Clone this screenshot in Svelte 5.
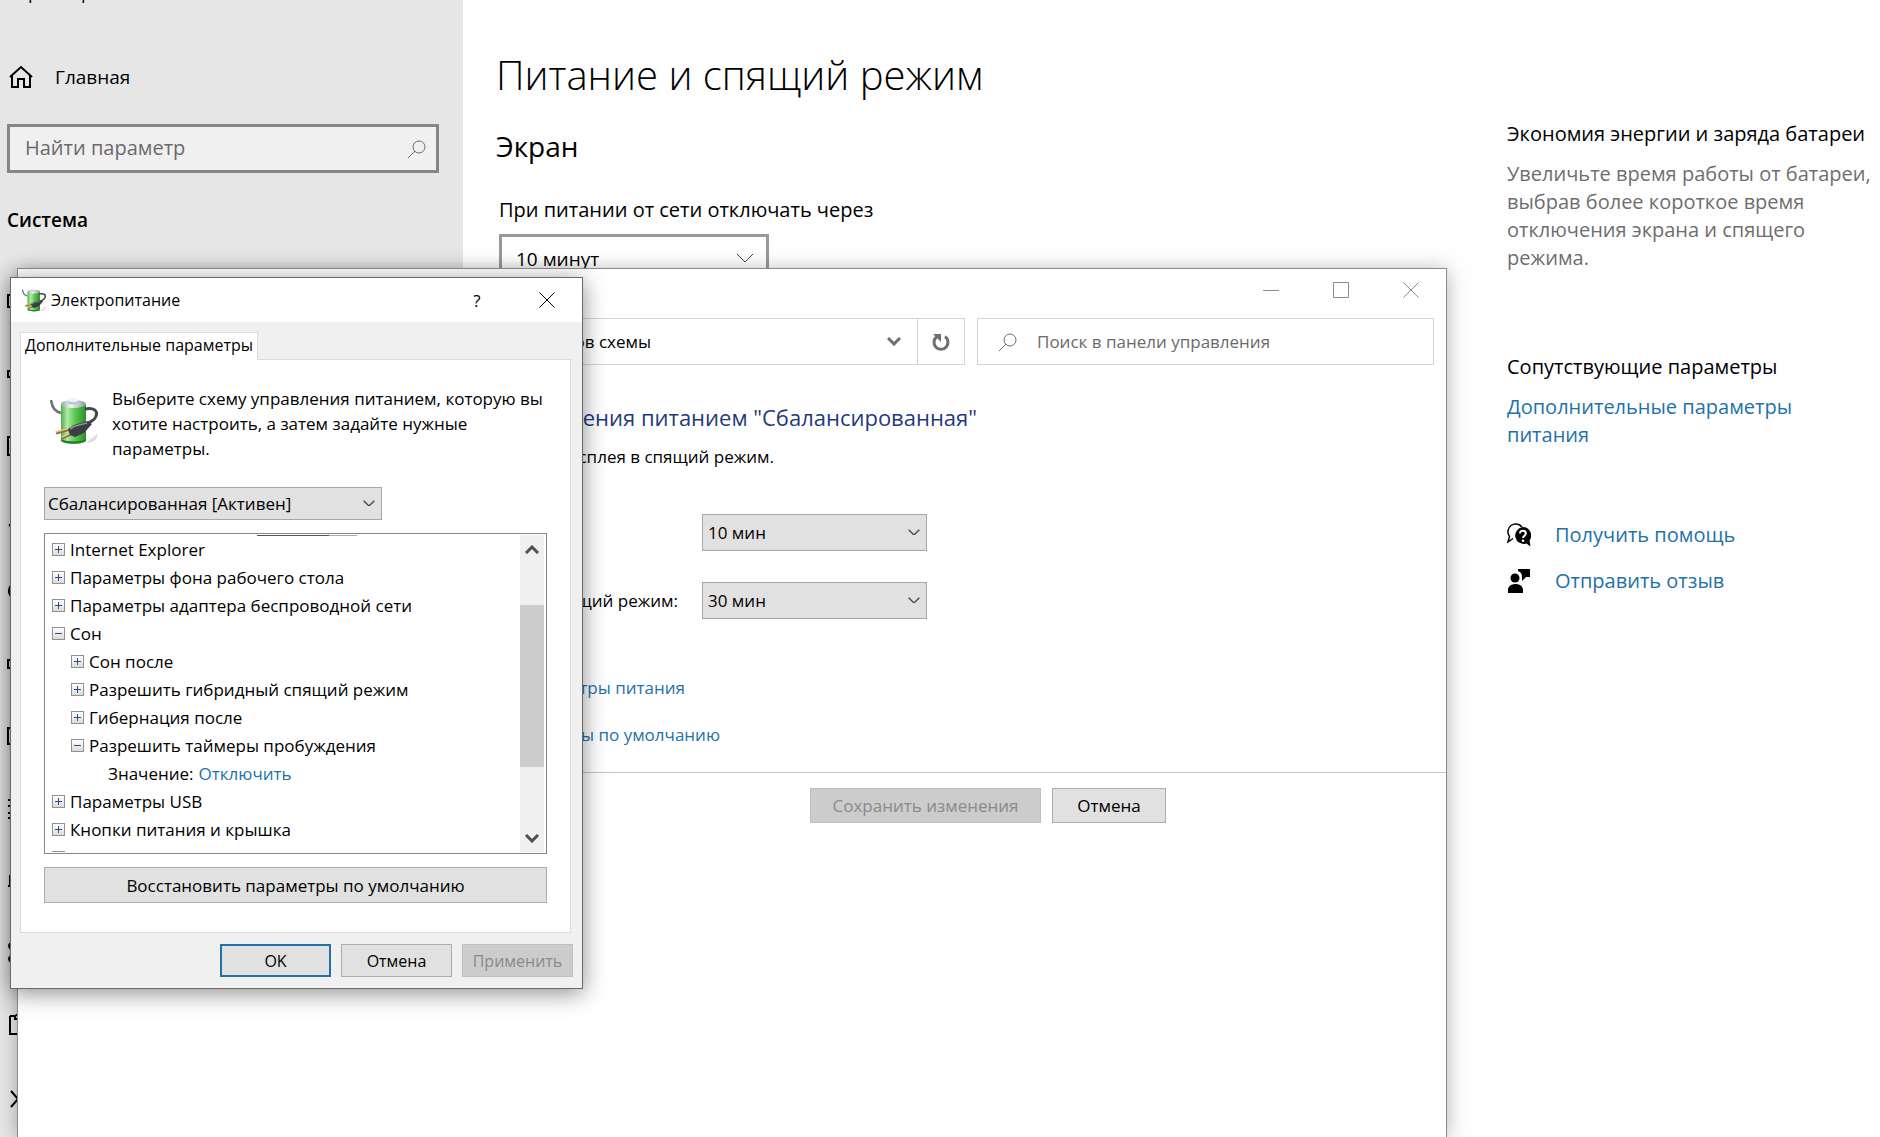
<script lang="ts">
    type Row = { text: string; level: number; open?: boolean; value?: string };

    const rows: Row[] = [
        { text: 'Internet Explorer', level: 0 },
        { text: 'Параметры фона рабочего стола', level: 0 },
        { text: 'Параметры адаптера беспроводной сети', level: 0 },
        { text: 'Сон', level: 0, open: true },
        { text: 'Сон после', level: 1 },
        { text: 'Разрешить гибридный спящий режим', level: 1 },
        { text: 'Гибернация после', level: 1 },
        { text: 'Разрешить таймеры пробуждения', level: 1, open: true },
        { text: 'Значение:', level: 2, value: 'Отключить' },
        { text: 'Параметры USB', level: 0 },
        { text: 'Кнопки питания и крышка', level: 0 },
        { text: 'PCI Express', level: 0 }
    ];

    // sidebar icons, 24x24 strokes
    const navIcons = [
        { name: 'Дисплей', d: 'M2 6h20v12H2z' },
        { name: 'Звук', d: 'M2 9h4l6-5v16l-6-5H2z' },
        { name: 'Уведомления и действия', d: 'M2 3h20v18H2z' },
        { name: 'Фокусировка внимания', d: 'M3 18h6v3z' },
        { name: 'Питание и спящий режим', d: 'M12 3a9 9 0 1 0 .1 0z' },
        { name: 'Батарея', d: 'M2 8h18v8H2z' },
        { name: 'Память', d: 'M2 4h20v16H2z' },
        { name: 'Планшет', d: 'M2 3h6M5 3v18M2 9h4v7H2M2 21h6' },
        { name: 'Многозадачность', d: 'M4 6v11M2 17h16M4 6h14' },
        { name: 'Проецирование на этот компьютер', d: 'M6 1a3 3 0 1 0 .1 0zM6 14a3 3 0 1 0 .1 0z' },
        { name: 'Общие возможности', d: 'M4 2h5v3h4M9 2l5-3M4 2v18h20' },
        { name: 'Буфер обмена', d: 'M5 4l7 8-7 8' }
    ];

    let search = $state('');
    let panelSearch = $state('');
    let screenTime = $state('10 минут');
    let displayOff = $state('10 мин');
    let sleepAfter = $state('30 мин');
    let plan = $state('Сбалансированная [Активен]');
</script>

{#snippet battery()}
    <svg viewBox="0 0 48 48" aria-hidden="true">
        <defs>
            <linearGradient id="cell" x1="0" x2="1">
                <stop offset="0" stop-color="#4fae48" />
                <stop offset="0.25" stop-color="#b4eba6" />
                <stop offset="0.55" stop-color="#5cc952" />
                <stop offset="1" stop-color="#2b8f2a" />
            </linearGradient>
            <linearGradient id="cap" x1="0" x2="1">
                <stop offset="0" stop-color="#98a2a8" />
                <stop offset="0.4" stop-color="#f4f7f8" />
                <stop offset="1" stop-color="#8b959b" />
            </linearGradient>
        </defs>
        <path d="M36 46l11-9c2 4-3 9-11 9z" fill="#dcdcdc" />
        <path d="M1 3c1 8 4 12 10 13" fill="none" stroke="#6b7278" stroke-width="2.500" />
        <path d="M11 7v36c0 5 25 5 25 0V7z" fill="url(#cell)" />
        <path d="M11 42v1c0 5 25 5 25 0v-1c-3 3-22 3-25 0z" fill="#2a7d29" />
        <ellipse cx="23.500" cy="7" rx="12.500" ry="4" fill="url(#cap)" />
        <path d="M18 3v3c0 2 10 2 10 0V3z" fill="#b9c8d6" />
        <ellipse cx="23" cy="3" rx="5" ry="2" fill="#eef2f4" />
        <path d="M35 12c9-2 13 2 11 7-1 4-4 5-8 7" fill="none" stroke="#41464b" stroke-width="3" />
        <path d="M6 36l14-4M12 41l11-5" stroke="#8a6d2c" stroke-width="3" />
        <path d="M6 35l14-4M12 40l11-5" stroke="#e3cb86" stroke-width="1.500" />
        <path d="M18 32l6-4 13-4 5 3-8 9-9 4-5-2z" fill="#3a3f44" />
        <path d="M20 32l5-3 12-3" stroke="#8d949a" stroke-width="1.500" fill="none" />
    </svg>
{/snippet}

{#snippet glass()}
    <svg class="glass" viewBox="0 0 18 18" aria-hidden="true">
        <circle cx="11" cy="7" r="6" /><path d="M7 11l-7 7" />
    </svg>
{/snippet}

{#snippet chevron()}
    <svg class="chevron" viewBox="0 0 18 10" aria-hidden="true"><path d="M1 1l8 8 8-8" /></svg>
{/snippet}

<div class="page">
    <aside class="sidebar">
        <div class="app-name">Параметры</div>
        <a class="home" href="#home">
            <svg viewBox="0 0 24 24" aria-hidden="true"><path d="M1 12L12 2l11 10M3 10v12h6v-8h6v8h6V10" /></svg>
            Главная
        </a>
        <label class="find">
            <input type="text" placeholder="Найти параметр" aria-label="Найти параметр" bind:value={search} />
            {@render glass()}
        </label>
        <h2>Система</h2>
        <nav>
            {#each navIcons as icon}
                <a href="#nav" aria-label={icon.name}>
                    <svg viewBox="0 0 24 24" aria-hidden="true"><path d={icon.d} /></svg>
                </a>
            {/each}
        </nav>
    </aside>

    <main>
        <h1>Питание и спящий режим</h1>
        <h2>Экран</h2>
        <label for="screen">При питании от сети отключать через</label>
        <div class="select big">
            <select id="screen" bind:value={screenTime}>
                <option>10 минут</option>
                <option>15 минут</option>
            </select>
            {@render chevron()}
        </div>
    </main>

    <aside class="related">
        <h3>Экономия энергии и заряда батареи</h3>
        <p>Увеличьте время работы от батареи, выбрав более короткое время отключения экрана и спящего режима.</p>
        <h3>Сопутствующие параметры</h3>
        <a class="more" href="#power">Дополнительные параметры питания</a>
        <a class="help" href="#help">
            <svg viewBox="0 0 24 24" aria-hidden="true">
                <path d="M6 15.500L1 19l1.500-5.500A7 7 0 1 1 15 4" fill="none" stroke="#000" stroke-width="1.500" />
                <path d="M16 4a8.500 8.500 0 1 0 3.500 16.500l4 3-1-6A8.500 8.500 0 0 0 16 4z" />
                <path d="M13 10.500c0-4 5.800-3.600 5.800 0 0 2.200-2.800 2.200-2.800 4.500" fill="none" stroke="#fff" stroke-width="2" />
                <circle cx="16" cy="17.800" r="1.300" fill="#fff" />
            </svg>
            Получить помощь
        </a>
        <a class="help" href="#feedback">
            <svg viewBox="0 0 24 24" aria-hidden="true">
                <circle cx="8" cy="9" r="4.500" />
                <path d="M1 24v-3c0-8 15-8 15 0v3zM11 0h12v8h-4l-4 4V8c0-3-1-5-4-6z" />
            </svg>
            Отправить отзыв
        </a>
    </aside>

    <section class="window">
        <header>
            <button aria-label="Свернуть"><svg viewBox="0 0 16 16"><path d="M0 8.500h16" /></svg></button>
            <button aria-label="Развернуть"><svg viewBox="0 0 16 16"><path d="M.5.5h15v15H.5z" /></svg></button>
            <button aria-label="Закрыть"><svg viewBox="0 0 16 16"><path d="M.5.5l15 15M15.500.5l-15 15" /></svg></button>
        </header>
        <div class="toolbar">
            <div class="address">
                <span class="path">Изменение параметров схемы</span>
                <button class="drop" aria-label="Предыдущие расположения">
                    <svg viewBox="0 0 14 9"><path d="M1 1l6 6 6-6" /></svg>
                </button>
                <button class="reload" aria-label="Обновить">
                    <svg viewBox="0 0 18 18"><path d="M5 3.500a7 7 0 1 0 8 0" /><path class="head" d="M1 1h8v8z" /></svg>
                </button>
            </div>
            <label class="panel-find">
                {@render glass()}
                <input type="text" placeholder="Поиск в панели управления" aria-label="Поиск в панели управления" bind:value={panelSearch} />
            </label>
        </div>
        <div class="content">
            <h2>Изменить параметры управления питанием "Сбалансированная"</h2>
            <p>Выберите параметры перехода дисплея в спящий режим.</p>
            <div class="fields">
                <label for="display">Отключать дисплей:</label>
                <div class="select">
                    <select id="display" bind:value={displayOff}>
                        <option>10 мин</option>
                        <option>15 мин</option>
                    </select>
                    {@render chevron()}
                </div>
                <label for="sleep">Переводить компьютер в спящий режим:</label>
                <div class="select">
                    <select id="sleep" bind:value={sleepAfter}>
                        <option>30 мин</option>
                        <option>45 мин</option>
                    </select>
                    {@render chevron()}
                </div>
            </div>
            <a class="advanced" href="#advanced">Изменить дополнительные параметры питания</a>
            <a class="defaults" href="#defaults">Восстановить параметры по умолчанию</a>
        </div>
        <div class="actions">
            <button class="save" disabled>Сохранить изменения</button>
            <button class="cancel">Отмена</button>
        </div>
    </section>

    <div class="dialog" role="dialog" aria-label="Электропитание">
        <header>
            {@render battery()}
            <span class="title">Электропитание</span>
            <button class="what" aria-label="Справка">?</button>
            <button aria-label="Закрыть"><svg viewBox="0 0 16 16"><path d="M.5.5l15 15M15.500.5l-15 15" /></svg></button>
        </header>
        <button class="tab">Дополнительные параметры</button>
        <div class="panel">
            <div class="intro">
                {@render battery()}
                <p>Выберите схему управления питанием, которую вы хотите настроить, а затем задайте нужные параметры.</p>
            </div>
            <div class="select plan">
                <select aria-label="Схема питания" bind:value={plan}>
                    <option>Сбалансированная [Активен]</option>
                </select>
                {@render chevron()}
            </div>
            <div class="tree">
                <ul>
                    {#each rows as row}
                        <li class="level{row.level}">
                            {#if !row.value}
                                <button class="box" aria-label={row.open ? 'Свернуть' : 'Развернуть'}>
                                    <svg viewBox="0 0 13 13"><path d={row.open ? 'M3 6.500h7' : 'M3 6.500h7M6.500 3v7'} /></svg>
                                </button>
                            {/if}
                            <span>{row.text}</span>
                            {#if row.value}<a href="#value">{row.value}</a>{/if}
                        </li>
                    {/each}
                </ul>
                <div class="scroll">
                    <button aria-label="Вверх"><svg viewBox="0 0 14 9"><path d="M1 8l6-6 6 6" /></svg></button>
                    <div class="thumb"></div>
                    <button aria-label="Вниз"><svg viewBox="0 0 14 9"><path d="M1 1l6 6 6-6" /></svg></button>
                </div>
            </div>
            <button class="restore">Восстановить параметры по умолчанию</button>
        </div>
        <footer>
            <button class="ok">OK</button>
            <button>Отмена</button>
            <button disabled>Применить</button>
        </footer>
    </div>
</div>

<style>
    :global(body) {
        background: #fff;
        color: #000;
        font-family: 'Segoe UI', 'Open Sans', 'Noto Sans', sans-serif;
        font-size: 17px;
    }

    .page {
        position: relative;
        display: flex;
        height: 100vh;
        overflow: hidden;
        background: #fefefe;
    }

    h1, h2, h3, p, ul {
        margin: 0;
        padding: 0;
        font-weight: 400;
    }

    a {
        color: #2272a8;
        text-decoration: none;
    }

    svg {
        display: block;
        flex: none;
    }

    button, input, select {
        box-sizing: border-box;
        margin: 0;
        font: inherit;
        color: inherit;
    }

    button {
        display: flex;
        align-items: center;
        justify-content: center;
        padding: 0;
        border: 0;
        background: none;
    }

    /* shared bits */
    .select {
        position: relative;
    }

    .select select {
        width: 100%;
        height: 100%;
        padding: 0 5px;
        appearance: none;
        border: 1px solid #a6a6a6;
        border-radius: 0;
        background: #e1e1e1;
    }

    .chevron {
        position: absolute;
        top: 50%;
        right: 7px;
        width: 12px;
        margin-top: -4px;
        fill: none;
        stroke: #444;
        stroke-width: 2;
        pointer-events: none;
    }

    .glass {
        width: 18px;
        fill: none;
        stroke: #6e6e6e;
    }

    /* settings sidebar */
    .sidebar {
        flex: none;
        width: 463px;
        background: #e6e6e6;
    }

    .app-name {
        margin-top: -20px;
        padding-left: 5px;
        font-size: 18px;
        line-height: 24px;
    }

    .home {
        display: flex;
        align-items: center;
        gap: 22px;
        margin-top: 59px;
        padding-left: 9px;
        color: #000;
        font-size: 19px;
        line-height: 28px;
    }

    .home svg {
        width: 24px;
        fill: none;
        stroke: #000;
        stroke-width: 2;
    }

    .find {
        display: flex;
        align-items: center;
        box-sizing: border-box;
        height: 49px;
        margin: 33px 24px 0 7px;
        padding-right: 10px;
        border: 3px solid #868686;
        background: #f0f0f0;
    }

    .find input, .panel-find input {
        flex: 1;
        min-width: 0;
        border: 0;
        outline: 0;
        background: none;
    }

    .find input {
        padding: 0 15px 2px;
        font-size: 20px;
    }

    .find input::placeholder, .panel-find input::placeholder {
        color: #6a6a6a;
        opacity: 1;
    }

    .sidebar h2 {
        margin-top: 33px;
        padding-left: 7px;
        font-size: 19px;
        font-weight: 600;
        line-height: 28px;
    }

    nav {
        display: flex;
        flex-direction: column;
        height: 870px;
        margin-top: 31px;
        padding-left: 6px;
    }

    nav a {
        display: flex;
        flex: 1;
        align-items: center;
    }

    nav svg {
        width: 24px;
        overflow: visible;
        fill: none;
        stroke: #000;
        stroke-width: 2;
    }

    /* settings page */
    main {
        flex: 1;
        padding: 46px 0 0 33px;
    }

    main h1 {
        font-size: 40px;
        font-weight: 300;
        line-height: 58px;
    }

    main h2 {
        margin-top: 22px;
        font-size: 28px;
        line-height: 40px;
    }

    main label {
        display: block;
        margin: 30px 0 0 3px;
        font-size: 20px;
        line-height: 28px;
    }

    .select.big {
        width: 270px;
        height: 49px;
        margin: 10px 0 0 3px;
    }

    .big select {
        padding: 0 14px;
        border: 3px solid #999;
        background: #fff;
        font-size: 19px;
    }

    .big .chevron {
        right: 15px;
        width: 18px;
        margin-top: -6px;
        stroke-width: 1;
    }

    .related {
        flex: none;
        width: 369px;
        padding: 120px 4px 0 0;
        font-size: 20px;
        line-height: 28px;
    }

    .related h3 {
        font-size: 20px;
        white-space: nowrap;
    }

    .related p {
        margin: 12px 0 81px;
        color: #6e6e6e;
    }

    .more {
        display: block;
        width: 300px;
        margin: 12px 0 63px;
    }

    .help {
        display: flex;
        align-items: center;
        gap: 24px;
        height: 46px;
    }

    .help svg {
        width: 24px;
    }

    /* control panel window */
    .window {
        position: absolute;
        top: 268px;
        right: 433px;
        bottom: 0;
        left: 17px;
        border: 1px solid #8c8c8c;
        border-bottom: 0;
        background: #fff;
        box-shadow: 0 2px 18px rgba(0, 0, 0, 0.3);
    }

    .window header {
        display: flex;
        justify-content: flex-end;
        height: 49px;
    }

    .window header button {
        width: 70px;
        height: 42px;
    }

    .window header svg {
        width: 16px;
        fill: none;
        stroke: #8c8c8c;
    }

    .toolbar {
        display: flex;
        gap: 12px;
        height: 47px;
        padding: 0 12px;
    }

    .address, .panel-find {
        display: flex;
        align-items: center;
        box-sizing: border-box;
        border: 1px solid #d4d4d4;
    }

    .address {
        flex: 2;
    }

    .path {
        flex: 1;
        padding-right: 220px;
        text-align: right;
    }

    .drop {
        width: 46px;
        height: 100%;
    }

    .drop svg {
        width: 14px;
        fill: none;
        stroke: #6e6e6e;
        stroke-width: 3;
    }

    .reload {
        width: 47px;
        height: 100%;
        border-left: 1px solid #d4d4d4;
    }

    .reload svg {
        width: 18px;
        fill: none;
        stroke: #6e6e6e;
        stroke-width: 3;
    }

    .reload .head {
        fill: #6e6e6e;
        stroke: none;
    }

    .panel-find {
        flex: none;
        gap: 20px;
        width: 457px;
        padding-left: 21px;
    }

    .panel-find input {
        padding: 0;
    }

    .content {
        display: flex;
        flex-direction: column;
        align-items: flex-start;
        height: 407px;
        line-height: 26px;
    }

    .content > * {
        box-sizing: border-box;
        text-align: right;
    }

    .content h2 {
        width: 959px;
        margin-top: 36px;
        color: #1f3a7d;
        font-size: 22px;
        line-height: 32px;
    }

    .content p {
        width: 756px;
        margin-top: 11px;
    }

    .fields {
        display: grid;
        grid-template-columns: max-content 225px;
        gap: 31px 24px;
        align-items: center;
        justify-content: end;
        width: 909px;
        margin-top: 44px;
        text-align: left;
    }

    .fields .select {
        height: 37px;
    }

    .advanced {
        width: 667px;
        margin-top: 56px;
    }

    .defaults {
        width: 702px;
        margin-top: 21px;
    }

    .actions {
        display: flex;
        gap: 11px;
        padding: 15px 0 0 792px;
        border-top: 1px solid #c4c4c4;
    }

    .actions button, .restore, footer button {
        border: 1px solid #adadad;
        background: #e1e1e1;
    }

    .actions button {
        height: 35px;
    }

    .actions .save {
        width: 231px;
    }

    .actions .cancel {
        width: 114px;
    }

    .actions button:disabled, footer button:disabled {
        border-color: #bfbfbf;
        background: #ccc;
        color: #8a8a8a;
    }

    /* power options dialog */
    .dialog {
        position: absolute;
        top: 277px;
        left: 10px;
        box-sizing: border-box;
        width: 573px;
        padding: 0 11px 11px 9px;
        border: 1px solid #6a6a6a;
        background: #f0f0f0;
        box-shadow: 0 4px 22px rgba(0, 0, 0, 0.45);
    }

    .dialog header {
        display: flex;
        align-items: center;
        height: 44px;
        margin: 0 -11px 10px -9px;
        padding-left: 11px;
        background: #fff;
        font-size: 16px;
    }

    .dialog header > svg {
        width: 24px;
    }

    .title {
        flex: 1;
        padding-left: 5px;
    }

    .dialog header button {
        width: 70px;
        height: 44px;
    }

    .dialog header .what {
        font-size: 17px;
    }

    .dialog header button svg {
        width: 16px;
        fill: none;
        stroke: #000;
    }

    .tab {
        position: relative;
        width: 238px;
        height: 28px;
        padding-bottom: 3px;
        border: 1px solid #dcdcdc;
        border-bottom: 0;
        background: #fff;
        font-size: 16px;
    }

    .panel {
        margin-top: -1px;
        padding: 26px 23px 29px;
        border: 1px solid #dcdcdc;
        background: #fff;
    }

    .intro {
        display: flex;
        gap: 14px;
        align-items: flex-start;
        height: 78px;
        padding-left: 6px;
    }

    .intro svg {
        width: 48px;
        margin-top: 11px;
    }

    .intro p {
        line-height: 25px;
    }

    .select.plan {
        width: 338px;
        height: 33px;
        margin-top: 23px;
    }

    .plan select {
        padding: 0 3px;
    }

    .tree {
        display: flex;
        box-sizing: border-box;
        height: 321px;
        margin-top: 13px;
        padding: 1px 2px 1px 1px;
        border: 1px solid #828790;
    }

    .tree ul {
        position: relative;
        flex: 1;
        overflow: hidden;
        list-style: none;
    }

    /* underline of the row scrolled out above */
    .tree ul::before {
        content: '';
        position: absolute;
        top: 0;
        left: 211px;
        width: 100px;
        height: 1px;
        background: linear-gradient(90deg, #555 72%, #aaa 72%);
    }

    .tree li {
        display: flex;
        align-items: center;
        gap: 5px;
        height: 28px;
        padding-left: 6px;
    }

    .tree .level1 {
        padding-left: 25px;
    }

    .tree .level2 {
        padding-left: 62px;
    }

    .box {
        width: 13px;
        height: 13px;
        border: 1px solid #919191;
        background: linear-gradient(#fff, #dcdcdc);
    }

    .box svg {
        width: 13px;
        stroke: #2f4b8a;
    }

    .scroll {
        display: flex;
        flex-direction: column;
        justify-content: space-between;
        width: 24px;
        background: #f0f0f0;
    }

    .scroll button {
        height: 28px;
    }

    .scroll svg {
        width: 14px;
        fill: none;
        stroke: #505050;
        stroke-width: 3;
    }

    .thumb {
        height: 162px;
        margin-bottom: 15px;
        background: #cdcdcd;
    }

    .restore {
        width: 100%;
        height: 36px;
        margin-top: 13px;
    }

    footer {
        display: flex;
        justify-content: flex-end;
        gap: 10px;
        margin: 11px -2px 0 0;
        font-size: 16px;
    }

    footer button {
        width: 111px;
        height: 33px;
    }

    footer .ok {
        border: 2px solid #2272a8;
    }
</style>
